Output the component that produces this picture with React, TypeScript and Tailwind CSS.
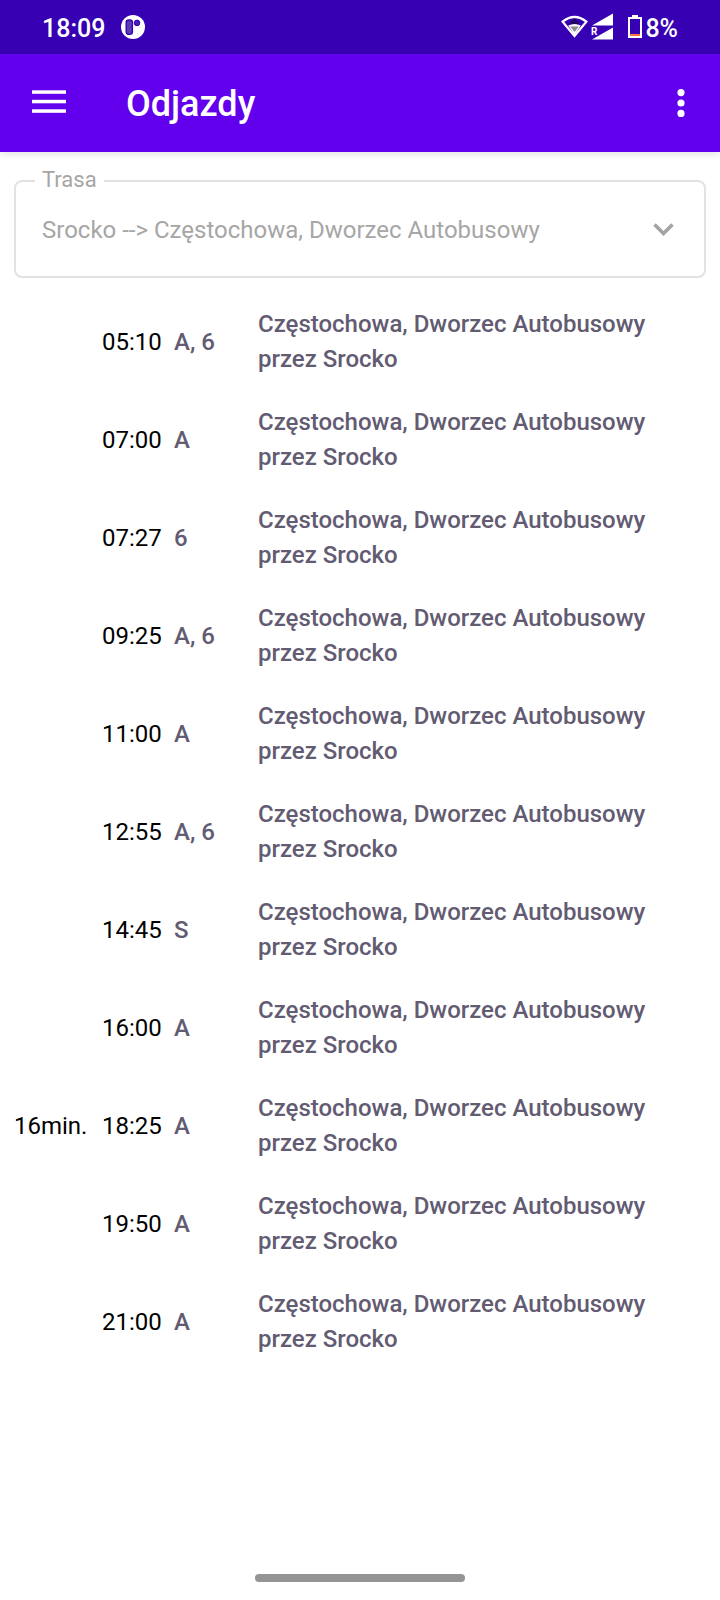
type Departure = {
  time: string;
  marks: string;
  wait?: string;
};

const departures: Departure[] = [
  { time: "05:10", marks: "A, 6" },
  { time: "07:00", marks: "A" },
  { time: "07:27", marks: "6" },
  { time: "09:25", marks: "A, 6" },
  { time: "11:00", marks: "A" },
  { time: "12:55", marks: "A, 6" },
  { time: "14:45", marks: "S" },
  { time: "16:00", marks: "A" },
  { time: "18:25", marks: "A", wait: "16min." },
  { time: "19:50", marks: "A" },
  { time: "21:00", marks: "A" },
];

function StatusBar() {
  return (
    <div className="flex h-[54px] items-center justify-between bg-[#3700b3] px-[42px] text-[25px] leading-8 font-medium text-white">
      <div className="flex items-center gap-4">
        <span className="pt-1">18:09</span>
        <svg className="size-6" viewBox="0 0 24 24" aria-hidden="true">
          <circle cx="12" cy="12" r="12" fill="#fff" />
          <rect x="5.2" y="5" width="6.2" height="14.4" rx="2.6" fill="#5c3cb4" stroke="#3700b3" strokeWidth="1.4" />
          <circle cx="16" cy="7.9" r="2.8" fill="#4a20b0" stroke="#3700b3" strokeWidth="1" />
        </svg>
      </div>
      <div className="flex items-center">
        <svg className="h-7 w-[52px]" viewBox="0 0 52 28" aria-hidden="true">
          <path d="M1.6 8.6Q13.5 -0.6 25.4 8.6L13.5 23Z" fill="none" stroke="#fff" strokeWidth="2.2" />
          <path d="M13.5 5L18.5 11H8.5Z" fill="#1d0560" />
          <path d="M7.2 12.6Q13.5 9.4 19.8 12.6L13.5 22Z" fill="#fff" />
          <path d="M9.2 13.4H17.8L13.5 19Z" fill="#8a8a8a" />
          <path d="M31 12.5L52 0.5V12.5Z" fill="#fff" />
          <path d="M31 26.5L52 14.5V26.5Z" fill="#fff" />
          <path d="M29 14H37.5V22L36 23H29Z" fill="#3700b3" />
          <text x="30" y="22.3" fontSize="10" fontWeight="700" fill="#fff">R</text>
        </svg>
        <svg className="ml-[15px] h-6 w-[14px]" viewBox="0 0 14 24" aria-hidden="true">
          <path d="M4 0H10V3H4Z" fill="#fff" />
          <rect x="1" y="3" width="12" height="19" fill="none" stroke="#fff" strokeWidth="2" />
          <rect x="2" y="19" width="10" height="2" fill="#ff7043" />
        </svg>
        <span className="ml-[3px] pt-1">8%</span>
      </div>
    </div>
  );
}

function AppBar() {
  return (
    <header className="flex h-[98px] items-center bg-[#6200ee] pr-4 pl-8 text-white shadow-[0_2px_8px_rgba(0,0,0,0.12)]">
      <button type="button" aria-label="Menu" className="flex h-14 items-center pb-[3px]">
        <svg className="h-6 w-[34px]" viewBox="0 0 34 24" fill="#fff" aria-hidden="true">
          <rect y="0.3" width="34" height="3.5" />
          <rect y="9.8" width="34" height="3.5" />
          <rect y="19.3" width="34" height="3.5" />
        </svg>
      </button>
      <h1 className="ml-[60px] flex-1 pt-0.5 text-4xl font-medium">Odjazdy</h1>
      <button type="button" aria-label="Więcej" className="flex h-14 w-14 items-center justify-center pl-[10px]">
        <svg className="h-7 w-2" viewBox="0 0 8 28" fill="#fff" aria-hidden="true">
          <circle cx="4" cy="3.6" r="3.6" />
          <circle cx="4" cy="14" r="3.6" />
          <circle cx="4" cy="24.4" r="3.6" />
        </svg>
      </button>
    </header>
  );
}

function RouteField() {
  return (
    <div className="relative mx-[14px] mt-7">
      <label htmlFor="route" className="absolute -top-3 left-[21px] bg-white px-[7px] text-[22px] leading-6 text-[#a6a6a6]">
        Trasa
      </label>
      <select
        id="route"
        disabled
        className="block h-[98px] w-full appearance-none rounded-lg border-2 border-[#e2e2e2] bg-transparent pt-0.5 pr-20 pl-[26px] text-2xl text-[#a6a6a6] opacity-100"
      >
        <option>Srocko --&gt; Częstochowa, Dworzec Autobusowy</option>
      </select>
      <svg className="pointer-events-none absolute top-[43px] right-8 h-[13px] w-[21px]" viewBox="0 0 21 13" aria-hidden="true">
        <path d="M1.5 1.5L10.5 10.5L19.5 1.5" fill="none" stroke="#a3a3a3" strokeWidth="3.6" />
      </svg>
    </div>
  );
}

function DepartureTable() {
  return (
    <table className="mt-[15px] w-full table-fixed text-left text-2xl text-black" aria-label="Odjazdy">
      <colgroup>
        <col className="w-[102px]" />
        <col className="w-[72px]" />
        <col className="w-[84px]" />
        <col />
      </colgroup>
      <tbody>
        {departures.map((d) => (
          <tr key={d.time} className="h-[98px]">
            <td className="p-0 pl-[14px]">{d.wait}</td>
            <td className="p-0">{d.time}</td>
            <td className="p-0 font-medium text-[#625b71]">{d.marks}</td>
            <td className="p-0 pr-[14px] leading-[35px] font-medium text-[#625b71]">
              Częstochowa, Dworzec Autobusowy
              <br />
              przez Srocko
            </td>
          </tr>
        ))}
      </tbody>
    </table>
  );
}

export default function App() {
  return (
    <div className="flex min-h-screen flex-col bg-white font-['Roboto',sans-serif]">
      <StatusBar />
      <AppBar />
      <main className="flex-1">
        <RouteField />
        <DepartureTable />
      </main>
      <div className="flex justify-center pb-[18px]">
        <div className="h-2 w-[210px] rounded-full bg-[#949494]" />
      </div>
    </div>
  );
}
